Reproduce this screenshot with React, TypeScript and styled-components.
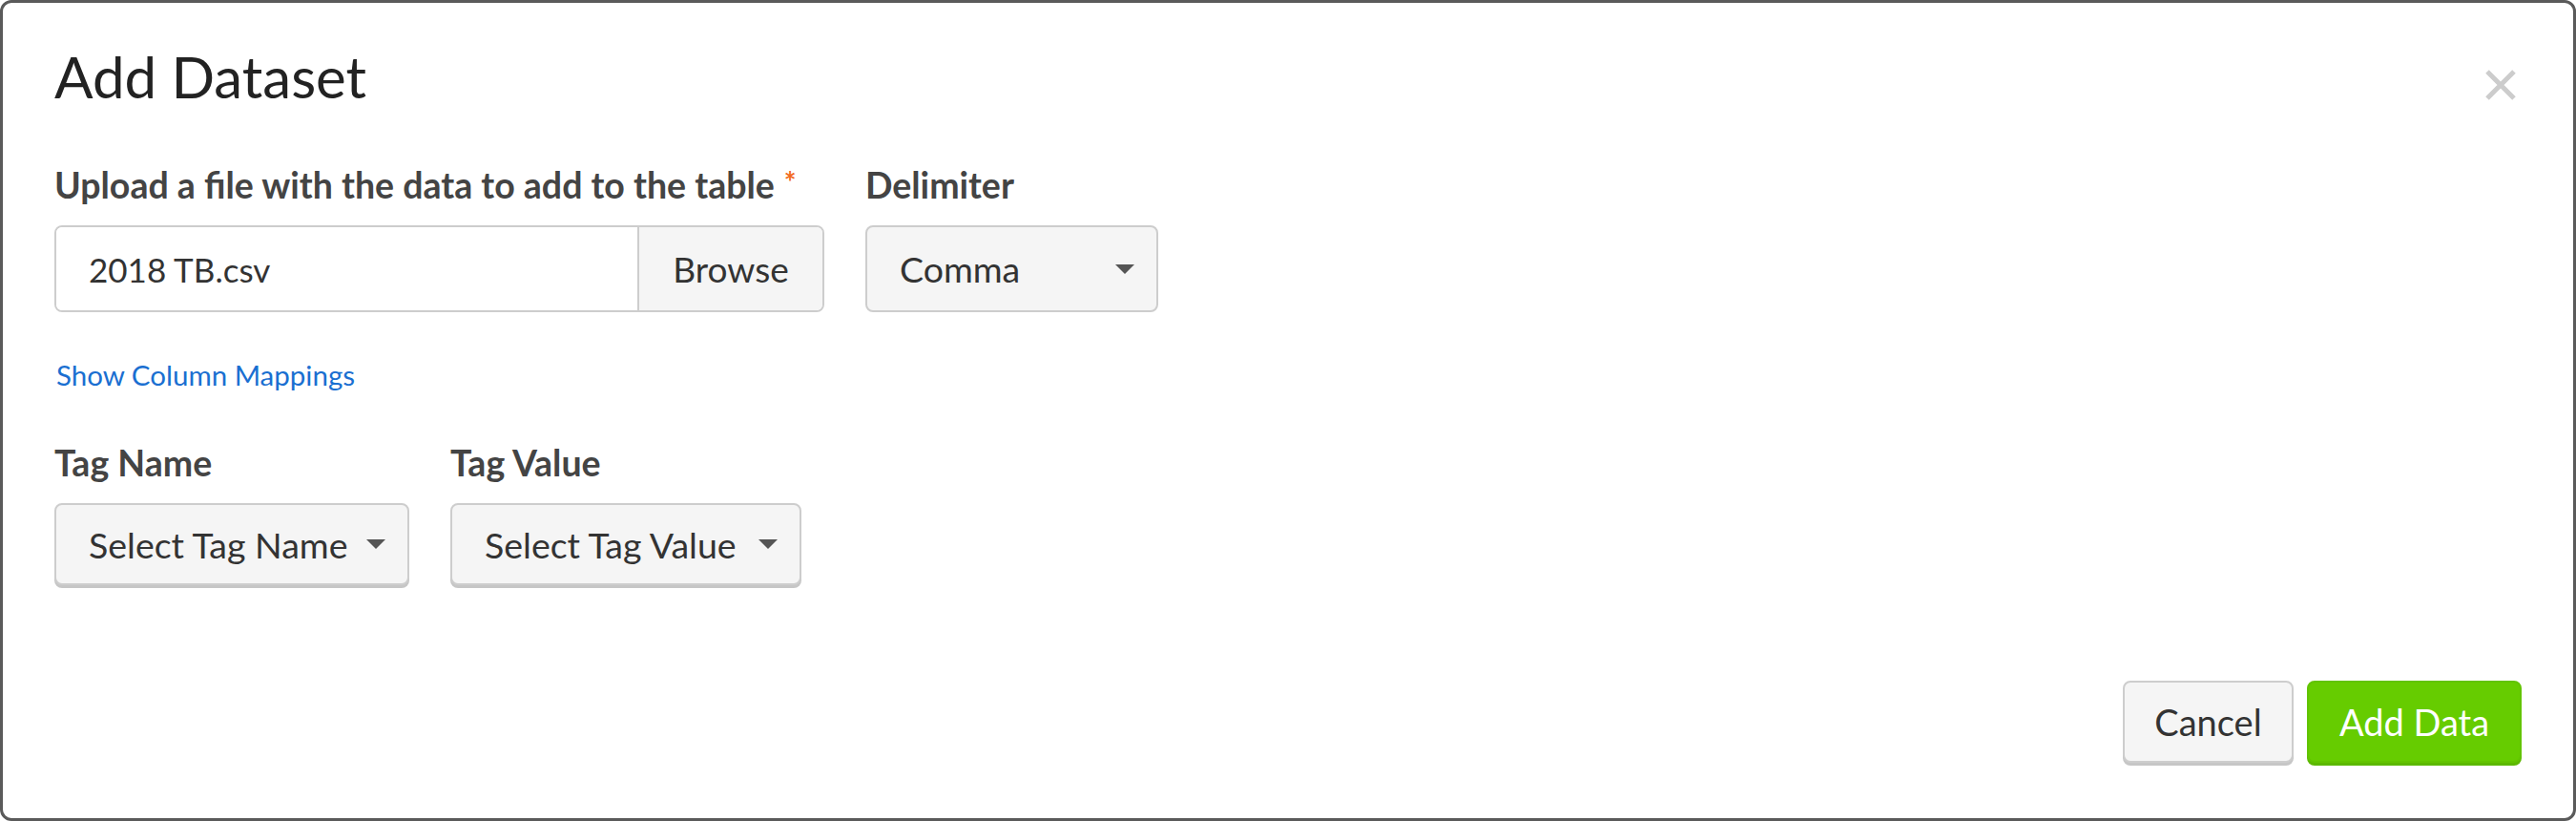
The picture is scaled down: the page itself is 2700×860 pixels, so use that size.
import React from 'react';
import styled, { createGlobalStyle } from 'styled-components';

const Global = createGlobalStyle`
  html, body { margin: 0; padding: 0; background: #ffffff; }
  body { font-family: Lato, "Noto Sans", sans-serif; color: #333; }
  * { box-sizing: border-box; }
`;

const Dialog = styled.div`
  width: 2700px;
  height: 860px;
  border: 3px solid #5a5a5a;
  border-radius: 12px;
  background: #fff;
  display: flex;
  flex-direction: column;
  padding: 47px 54px 58px 54px;
  position: relative;
`;

const Header = styled.div`
  display: flex;
  align-items: center;
  justify-content: space-between;
`;

const Title = styled.h1`
  margin: 0;
  font-size: 60px;
  line-height: 60px;
  font-weight: 400;
  color: #222;
`;

const Close = styled.button`
  position: absolute;
  top: 68px;
  right: 58px;
  width: 36px;
  height: 36px;
  padding: 0;
  border: none;
  background: transparent;
  cursor: pointer;
`;

const Row = styled.div<{ $mt: number }>`
  display: flex;
  gap: 43px;
  margin-top: ${p => p.$mt}px;
`;

const Field = styled.div`
  display: flex;
  flex-direction: column;
  gap: 25px;
`;

const Label = styled.label`
  font-size: 37.5px;
  line-height: 34px;
  font-weight: 700;
  color: #444;
  white-space: nowrap;
`;

const Req = styled.span`
  color: #f26b22;
  font-size: 30px;
  vertical-align: top;
  margin-left: 10px;
  position: relative;
  top: -4px;
`;

const InputGroup = styled.div`
  display: flex;
  width: 807px;
  height: 91px;
  border: 2px solid #cdcdcd;
  border-radius: 8px;
  overflow: hidden;
`;

const FileInput = styled.div`
  flex: 1;
  display: flex;
  align-items: center;
  padding-left: 34px;
  font-size: 35px;
  color: #333;
  background: #fff;
`;

const Browse = styled.button`
  width: 194px;
  border: none;
  border-left: 2px solid #cdcdcd;
  background: #f5f5f5;
  font-family: inherit;
  font-size: 37px;
  color: #333;
  padding: 0;
`;

const Select = styled.div<{ $w: number; $raised?: boolean }>`
  width: ${p => p.$w}px;
  height: ${p => (p.$raised ? 86 : 91)}px;
  border: 2px solid #cdcdcd;
  border-radius: 8px;
  background: #f5f5f5;
  display: flex;
  align-items: center;
  justify-content: space-between;
  padding: 0 23px 0 34px;
  font-size: 37.5px;
  color: #333;
  box-shadow: ${p => (p.$raised ? '0 3px 0 #c6c6c6' : 'none')};
  white-space: nowrap;
`;

const Caret = styled.span`
  width: 0;
  height: 0;
  border-left: 10px solid transparent;
  border-right: 10px solid transparent;
  border-top: 10px solid #555;
  flex-shrink: 0;
`;

const Link = styled.a`
  display: block;
  margin-top: 52px;
  margin-left: 2px;
  font-size: 29.5px;
  line-height: 27px;
  color: #1a6fd1;
  text-decoration: none;
  cursor: pointer;
`;

const Footer = styled.div`
  margin-top: auto;
  display: flex;
  justify-content: flex-end;
  gap: 14px;
`;

const Button = styled.button<{ $primary?: boolean; $w: number }>`
  width: ${p => p.$w}px;
  height: 86px;
  border-radius: 8px;
  font-family: inherit;
  font-size: 38px;
  padding: 0;
  cursor: pointer;
  border: ${p => (p.$primary ? '2px solid #62c400' : '2px solid #cdcdcd')};
  background: ${p => (p.$primary ? '#66cc00' : '#f5f5f5')};
  color: ${p => (p.$primary ? '#ffffff' : '#333')};
  box-shadow: ${p => (p.$primary ? '0 3px 0 #5cb800' : '0 3px 0 #c6c6c6')};
`;

export default function App() {
  return (
    <>
      <Global />
      <Dialog>
        <Header>
          <Title>Add Dataset</Title>
        </Header>
        <Close aria-label="Close">
          <svg width="36" height="36" viewBox="0 0 36 36">
            <path d="M4 4 L32 32 M32 4 L4 32" stroke="#cccccc" strokeWidth="5" />
          </svg>
        </Close>
        <Row $mt={67}>
          <Field>
            <Label>
              Upload a file with the data to add to the table<Req>*</Req>
            </Label>
            <InputGroup>
              <FileInput>2018 TB.csv</FileInput>
              <Browse>Browse</Browse>
            </InputGroup>
          </Field>
          <Field>
            <Label>Delimiter</Label>
            <Select $w={307}>
              Comma
              <Caret />
            </Select>
          </Field>
        </Row>
        <Link>Show Column Mappings</Link>
        <Row $mt={62}>
          <Field>
            <Label>Tag Name</Label>
            <Select $w={372} $raised>
              Select Tag Name
              <Caret />
            </Select>
          </Field>
          <Field>
            <Label>Tag Value</Label>
            <Select $w={368} $raised>
              Select Tag Value
              <Caret />
            </Select>
          </Field>
        </Row>
        <Footer>
          <Button $w={179}>Cancel</Button>
          <Button $w={225} $primary>Add Data</Button>
        </Footer>
      </Dialog>
    </>
  );
}
